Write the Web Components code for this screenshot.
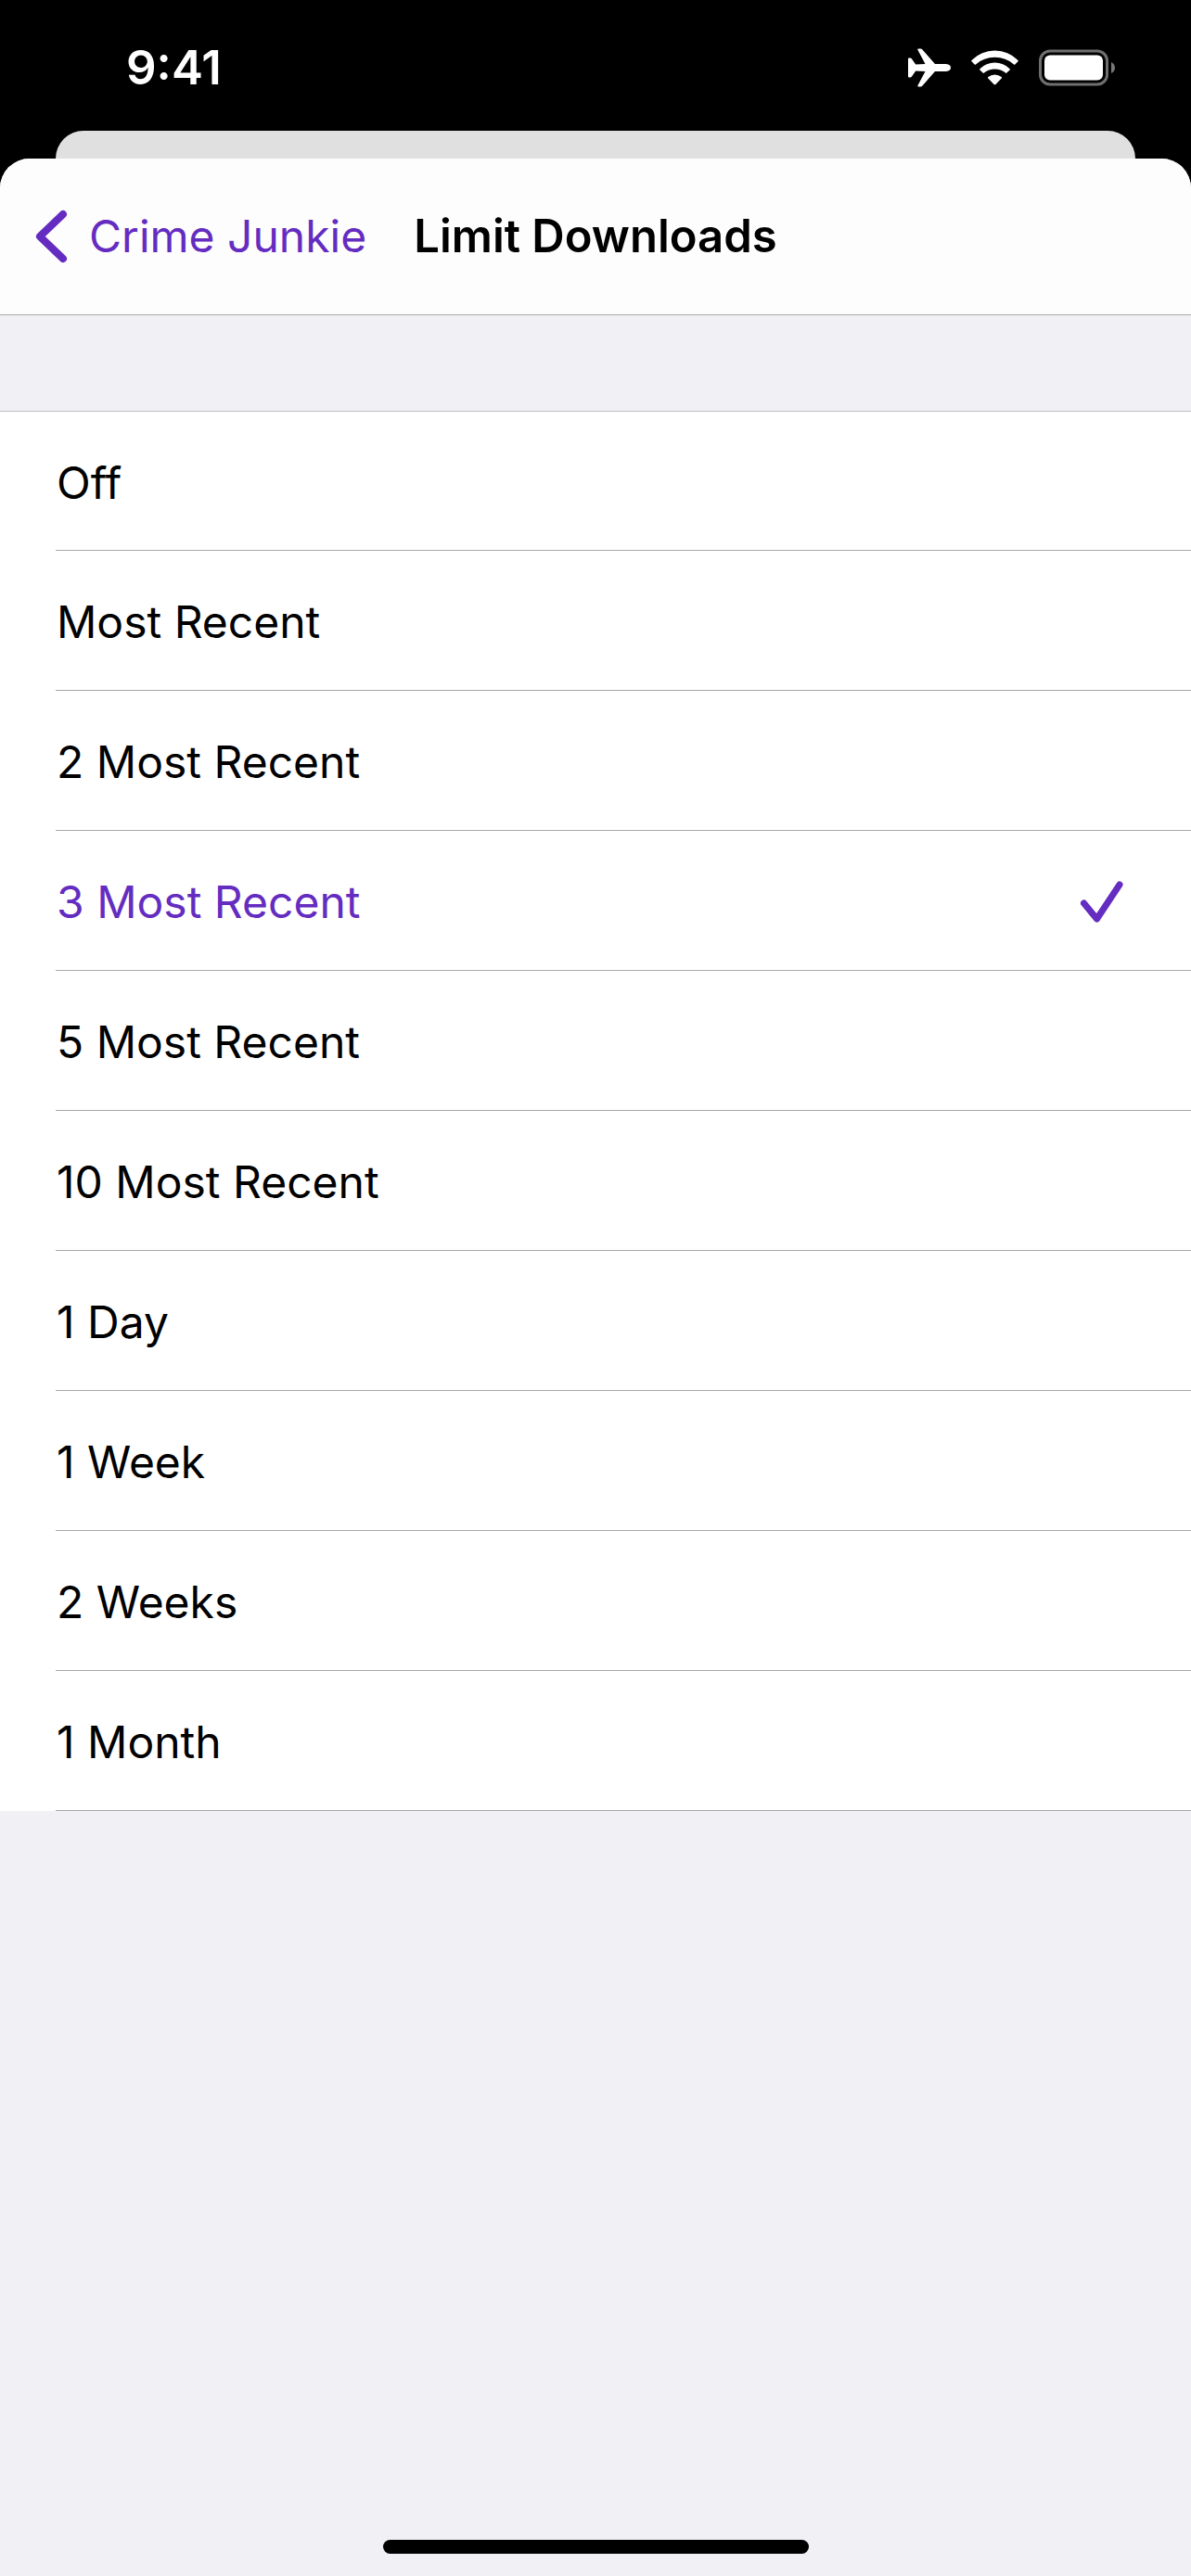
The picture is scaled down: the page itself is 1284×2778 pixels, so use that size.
<!DOCTYPE html>
<html lang="en">
<head>
<meta charset="utf-8">
<meta name="viewport" content="width=device-width, initial-scale=1">
<title>Limit Downloads</title>
<style>
  :root {
    --accent: #642cc0;
    --hairline: #a8a8aa;
    --page: #f1f0f5;
    --gutter: 60px;
  }
  body {
    margin: 0;
    min-height: 100vh;
    display: flex;
    flex-direction: column;
    background: #000;
    color: #000;
    font: 400 48px/60px Inter, "Liberation Sans", sans-serif;
  }
</style>
</head>
<body>
<status-bar>9:41</status-bar>
<modal-sheet>
  <nav-bar slot="bar" back="Crime Junkie">Limit Downloads</nav-bar>
  <option-list label="Limit Downloads">
    <option-row>Off</option-row>
    <option-row>Most Recent</option-row>
    <option-row>2 Most Recent</option-row>
    <option-row checked>3 Most Recent</option-row>
    <option-row>5 Most Recent</option-row>
    <option-row>10 Most Recent</option-row>
    <option-row>1 Day</option-row>
    <option-row>1 Week</option-row>
    <option-row>2 Weeks</option-row>
    <option-row>1 Month</option-row>
  </option-list>
</modal-sheet>

<script>
class BaseElement extends HTMLElement {
  constructor() {
    super();
    this.attachShadow({ mode: 'open' }).innerHTML = this.constructor.markup;
  }
}

// Clock on the left, radio and battery state on the right
class StatusBar extends BaseElement {
  static markup = `
    <style>
      :host { display: flex; align-items: center; justify-content: space-between;
        box-sizing: border-box; height: 141px; padding: 4px 82px 0 136px;
        color: #fff; font-size: 51px; font-weight: 600; }
      .icons { display: flex; align-items: center; gap: 22px; }
      svg { display: block; }
    </style>
    <time><slot></slot></time>
    <div class="icons">
      <svg width="46" height="42" viewBox="0 0 46 42" fill="#fff" role="img" aria-label="Airplane mode">
        <path d="M0 11.500Q0 10.500 1 10.500H2.500Q3.300 10.500 3.800 11.200L8.200 17.400L18.500 17L10.500 2Q9.800 .5 11.300 .5H13.500Q14.500 .5 15.200 1.300L29 17H41Q46 17.500 46 21Q46 24.500 41 25H29L15.200 40.700Q14.500 41.500 13.500 41.500H11.300Q9.800 41.500 10.500 40L18.500 25L8.200 24.600L3.800 30.800Q3.300 31.500 2.500 31.500H1Q0 31.500 0 30.500Z"/>
      </svg>
      <svg width="51" height="38" viewBox="0 0 51 38" fill="#fff" role="img" aria-label="Wi-Fi">
        <path d="M.5 11Q11 .5 25.500 .5T50.500 11Q51 11.600 50.500 12.200L47.300 15.400Q46.600 16 46 15.400Q37.300 7.800 25.500 7.800T5 15.400Q4.400 16 3.700 15.400L.5 12.200Q0 11.600 .5 11Z"/>
        <path d="M9.400 20.200Q16.300 13.600 25.500 13.600T41.600 20.200Q42.200 20.800 41.600 21.400L38.400 24.600Q37.700 25.200 37 24.600Q32 20.500 25.500 20.500T14 24.600Q13.300 25.200 12.600 24.600L9.400 21.400Q8.800 20.800 9.400 20.200Z"/>
        <path d="M18.300 29Q21.300 26.400 25.500 26.400T32.700 29Q33.400 29.700 32.700 30.400L26.400 36.900Q25.500 37.700 24.600 36.900L18.300 30.400Q17.600 29.700 18.300 29Z"/>
      </svg>
      <svg width="82" height="40" viewBox="0 0 82 40" role="img" aria-label="Battery full">
        <rect x="1.500" y="2" width="72" height="36" rx="10.500" fill="none" stroke="#6f6f6f" stroke-width="3"/>
        <rect x="6" y="6.500" width="63" height="27" rx="6" fill="#fff"/>
        <path d="M78 14Q82 16 82 20T78 26Z" fill="#777"/>
      </svg>
    </div>`;
}

// Foreground sheet with the edge of the card behind it
class ModalSheet extends BaseElement {
  static markup = `
    <style>
      :host { flex: 1; display: flex; flex-direction: column; }
      .behind { height: 30px; margin: 0 var(--gutter); border-radius: 30px 30px 0 0; background: #e0e0e0; }
      .sheet { flex: 1; display: flex; flex-direction: column; border-radius: 32px 32px 0 0;
        overflow: hidden; background: var(--page); }
      main { flex: 1; padding-top: 103px; }
      .home { align-self: center; width: 36%; max-width: 459px; height: 15px; margin-bottom: 24px;
        border-radius: 8px; background: #000; }
    </style>
    <div class="behind"></div>
    <div class="sheet">
      <slot name="bar"></slot>
      <main><slot></slot></main>
      <div class="home"></div>
    </div>`;
}

class NavBar extends BaseElement {
  static markup = `
    <style>
      :host { display: grid; grid-template-columns: 1fr auto 1fr; align-items: center;
        box-sizing: border-box; height: 169px; padding: 0 36px;
        background: #fdfdfd; border-bottom: 1px solid var(--hairline); }
      button { justify-self: start; display: flex; align-items: center; gap: 20px;
        margin: 0; padding: 0; border: 0; background: none; color: var(--accent);
        font: inherit; white-space: nowrap; cursor: pointer; }
      svg { display: block; flex: none; }
      h1 { margin: 0; font: inherit; font-size: 49px; font-weight: 600; white-space: nowrap; }
    </style>
    <button type="button">
      <svg width="40" height="58" viewBox="0 0 40 58" fill="none" stroke="currentColor"
        stroke-width="8" stroke-linecap="round" stroke-linejoin="round" aria-hidden="true">
        <path d="M32 5L7 29L32 53"/>
      </svg>
      <span></span>
    </button>
    <h1><slot></slot></h1>`;
  connectedCallback() {
    this.shadowRoot.querySelector('span').textContent = this.getAttribute('back');
  }
}

// Keeps a single row checked at a time
class OptionList extends BaseElement {
  static markup = `
    <style>
      :host { display: flex; flex-direction: column; background: #fff; }
    </style>
    <slot></slot>`;
  connectedCallback() {
    this.setAttribute('role', 'radiogroup');
    this.setAttribute('aria-label', this.getAttribute('label'));
    this.addEventListener('pick', (event) => {
      for (const row of this.children) row.toggleAttribute('checked', row === event.target);
    });
  }
}

class OptionRow extends BaseElement {
  static observedAttributes = ['checked'];
  static markup = `
    <style>
      :host { display: flex; box-sizing: border-box; height: 151px; padding-left: var(--gutter); }
      :host(:first-child) { border-top: 1px solid #c0c0c3; }
      label { flex: 1; display: flex; align-items: center; justify-content: space-between;
        padding: 4px 72px 0 1px; border-bottom: 1px solid var(--hairline); cursor: pointer; }
      input { appearance: none; width: 0; height: 0; margin: 0; outline: none; }
      svg { display: none; }
      :host([checked]) label { color: var(--accent); }
      :host([checked]) svg { display: block; }
    </style>
    <label>
      <span><slot></slot></span>
      <input type="radio">
      <svg width="50" height="46" viewBox="0 0 50 46" fill="none" stroke="currentColor"
        stroke-width="7" stroke-linecap="round" stroke-linejoin="round" aria-hidden="true">
        <path d="M6.500 24L20.500 41L45 4"/>
      </svg>
    </label>`;
  connectedCallback() {
    this.shadowRoot.querySelector('input').addEventListener('change', () =>
      this.dispatchEvent(new CustomEvent('pick', { bubbles: true })));
  }
  attributeChangedCallback() {
    this.shadowRoot.querySelector('input').checked = this.hasAttribute('checked');
  }
}

customElements.define('status-bar', StatusBar);
customElements.define('modal-sheet', ModalSheet);
customElements.define('nav-bar', NavBar);
customElements.define('option-list', OptionList);
customElements.define('option-row', OptionRow);
</script>
</body>
</html>
